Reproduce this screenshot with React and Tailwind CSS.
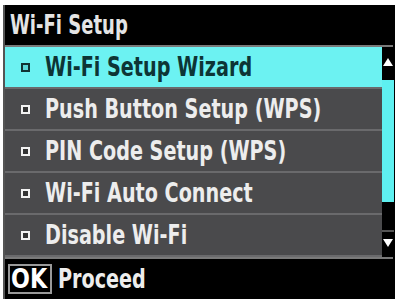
import React from 'react'

const items = [
  'Wi-Fi Setup Wizard',
  'Push Button Setup (WPS)',
  'PIN Code Setup (WPS)',
  'Wi-Fi Auto Connect',
  'Disable Wi-Fi',
]

const font = { fontFamily: '"DejaVu Sans Condensed", "DejaVu Sans", sans-serif' }

// condensed LCD-style label
const Label = ({ children, className = '' }) => (
  <span
    className={`inline-block origin-left whitespace-nowrap text-[26px] font-bold leading-none ${className}`}
  >
    {children}
  </span>
)

const Row = ({ label, active }) => (
  <div
    className={`flex items-center h-[42px] border-b-2 border-[#6a6a6c] ${
      active ? 'bg-[#6cf2f2] text-[#0d3535]' : 'bg-[#4a4a4c] text-[#ededed]'
    }`}
  >
    <span
      className={`ml-[16px] w-[9px] h-[9px] shrink-0 border-2 ${
        active ? 'border-[#113333] bg-[#5ad8d8]' : 'border-[#f2f2f2] bg-[#333]'
      }`}
    />
    <Label className="ml-[15px] scale-x-[0.82]">{label}</Label>
  </div>
)

export default function App() {
  return (
    <div className="w-[395px] h-[301px] bg-white pt-[5px] pl-[3px] pb-[2px]" style={font}>
      <div className="h-full bg-black border-l-2 border-[#555] flex flex-col">
        <div className="h-[40px] flex items-center pl-[5px] text-[#e4e4e4]">
          <Label className="scale-x-[0.77]">Wi-Fi Setup</Label>
        </div>
        <div className="h-[2px] bg-[#7a7a7a] mr-[2px]" />
        <div className="flex h-[210px]">
          <div className="flex-1 flex flex-col">
            {items.map((t, i) => (
              <Row key={t} label={t} active={i === 0} />
            ))}
          </div>
          <div className="w-[17px] mr-[2px] flex flex-col items-center">
            <div className="mt-[11px] w-0 h-0 border-l-[5px] border-r-[5px] border-b-[8px] border-l-transparent border-r-transparent border-b-white" />
            <div className="mt-[14px] w-[12px] h-[122px] bg-[#5ef0f0]" />
            <div className="mt-[28px] w-full h-[2px] bg-[#555]" />
            <div className="mt-[7px] w-0 h-0 border-l-[5px] border-r-[5px] border-t-[8px] border-l-transparent border-r-transparent border-t-white" />
          </div>
        </div>
        <div className="h-[2px] bg-[#7a7a7a] mr-[2px]" />
        <div className="flex-1 flex items-center pl-[3px]">
          <span className="w-[44px] h-[30px] border-2 border-[#9a9a9a] flex items-center justify-center text-white overflow-hidden">
            <Label className="scale-x-[0.95] origin-center">OK</Label>
          </span>
          <Label className="ml-[6px] text-[#ededed] scale-x-[0.82]">Proceed</Label>
        </div>
      </div>
    </div>
  )
}
